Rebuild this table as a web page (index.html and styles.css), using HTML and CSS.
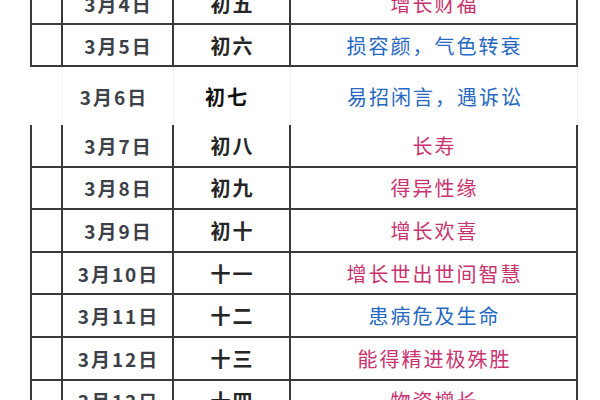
FILE: index.html
```html
<!DOCTYPE html>
<html lang="zh">
<head>
<meta charset="utf-8">
<link rel="stylesheet" href="styles.css">
</head>
<body>
<div class="sheet">
  <div class="block top">
    <div class="row"><div class="c blank"></div><div class="c date">3月4日</div><div class="c lunar">初五</div><div class="c desc pink">增长财福</div></div>
    <div class="row"><div class="c blank"></div><div class="c date">3月5日</div><div class="c lunar">初六</div><div class="c desc blue">损容颜，气色转衰</div></div>
  </div>
  <div class="row loose">
    <div class="c blank"></div><div class="c date">3月6日</div><div class="c lunar">初七</div><div class="c desc blue">易招闲言，遇诉讼</div>
  </div>
  <div class="block bottom">
    <div class="row"><div class="c blank"></div><div class="c date">3月7日</div><div class="c lunar">初八</div><div class="c desc pink">长寿</div></div>
    <div class="row"><div class="c blank"></div><div class="c date">3月8日</div><div class="c lunar">初九</div><div class="c desc pink">得异性缘</div></div>
    <div class="row"><div class="c blank"></div><div class="c date">3月9日</div><div class="c lunar">初十</div><div class="c desc pink">增长欢喜</div></div>
    <div class="row"><div class="c blank"></div><div class="c date">3月10日</div><div class="c lunar">十一</div><div class="c desc pink">增长世出世间智慧</div></div>
    <div class="row"><div class="c blank"></div><div class="c date">3月11日</div><div class="c lunar">十二</div><div class="c desc blue">患病危及生命</div></div>
    <div class="row"><div class="c blank"></div><div class="c date">3月12日</div><div class="c lunar">十三</div><div class="c desc pink">能得精进极殊胜</div></div>
    <div class="row"><div class="c blank"></div><div class="c date">3月13日</div><div class="c lunar">十四</div><div class="c desc pink">物资增长</div></div>
  </div>
</div>
</body>
</html>
```
FILE: styles.css
```css
html, body {
  margin: 0;
  padding: 0;
  background: #ffffff;
  overflow: hidden;
  height: 400px;
}
.sheet {
  margin-top: -17px;
  margin-left: 30px;
  width: 548px;
  font-family: "Noto Sans CJK SC", "Noto Sans", sans-serif;
}
.row {
  display: grid;
  grid-template-columns: 31px 111px 117px 287px;
  height: 42px;
  box-sizing: border-box;
}
.block .row {
  border-left: 2px solid #3a3a3a;
  border-bottom: 2px solid #3a3a3a;
}
.block.bottom .row {
  height: 42.6px;
}
.block .c {
  border-right: 2px solid #3a3a3a;
}
.c {
  box-sizing: border-box;
  display: flex;
  align-items: center;
  justify-content: center;
  white-space: nowrap;
}
.date {
  font-size: 19px;
  font-weight: 700;
  color: #3c4047;
  letter-spacing: 2px;
  padding-left: 2px;
}
.lunar {
  font-size: 20px;
  font-weight: 700;
  color: #262626;
  letter-spacing: 2px;
  padding-left: 2px;
}
.desc {
  font-size: 20px;
  letter-spacing: 2px;
  padding-left: 2px;
}
.pink { color: #c8336f; }
.blue { color: #2768c0; }

.row.loose {
  height: 58px;
  border-left: 2px solid transparent;
}
.row.loose .c {
  border-right: 1px solid #f1f1f1;
}
.row.loose .blank {
  border-right-color: #f6f6f6;
}
.row.loose .date {
  padding-right: 10px;
}
.row.loose .lunar {
  padding-right: 12px;
  color: #111111;
}
```
